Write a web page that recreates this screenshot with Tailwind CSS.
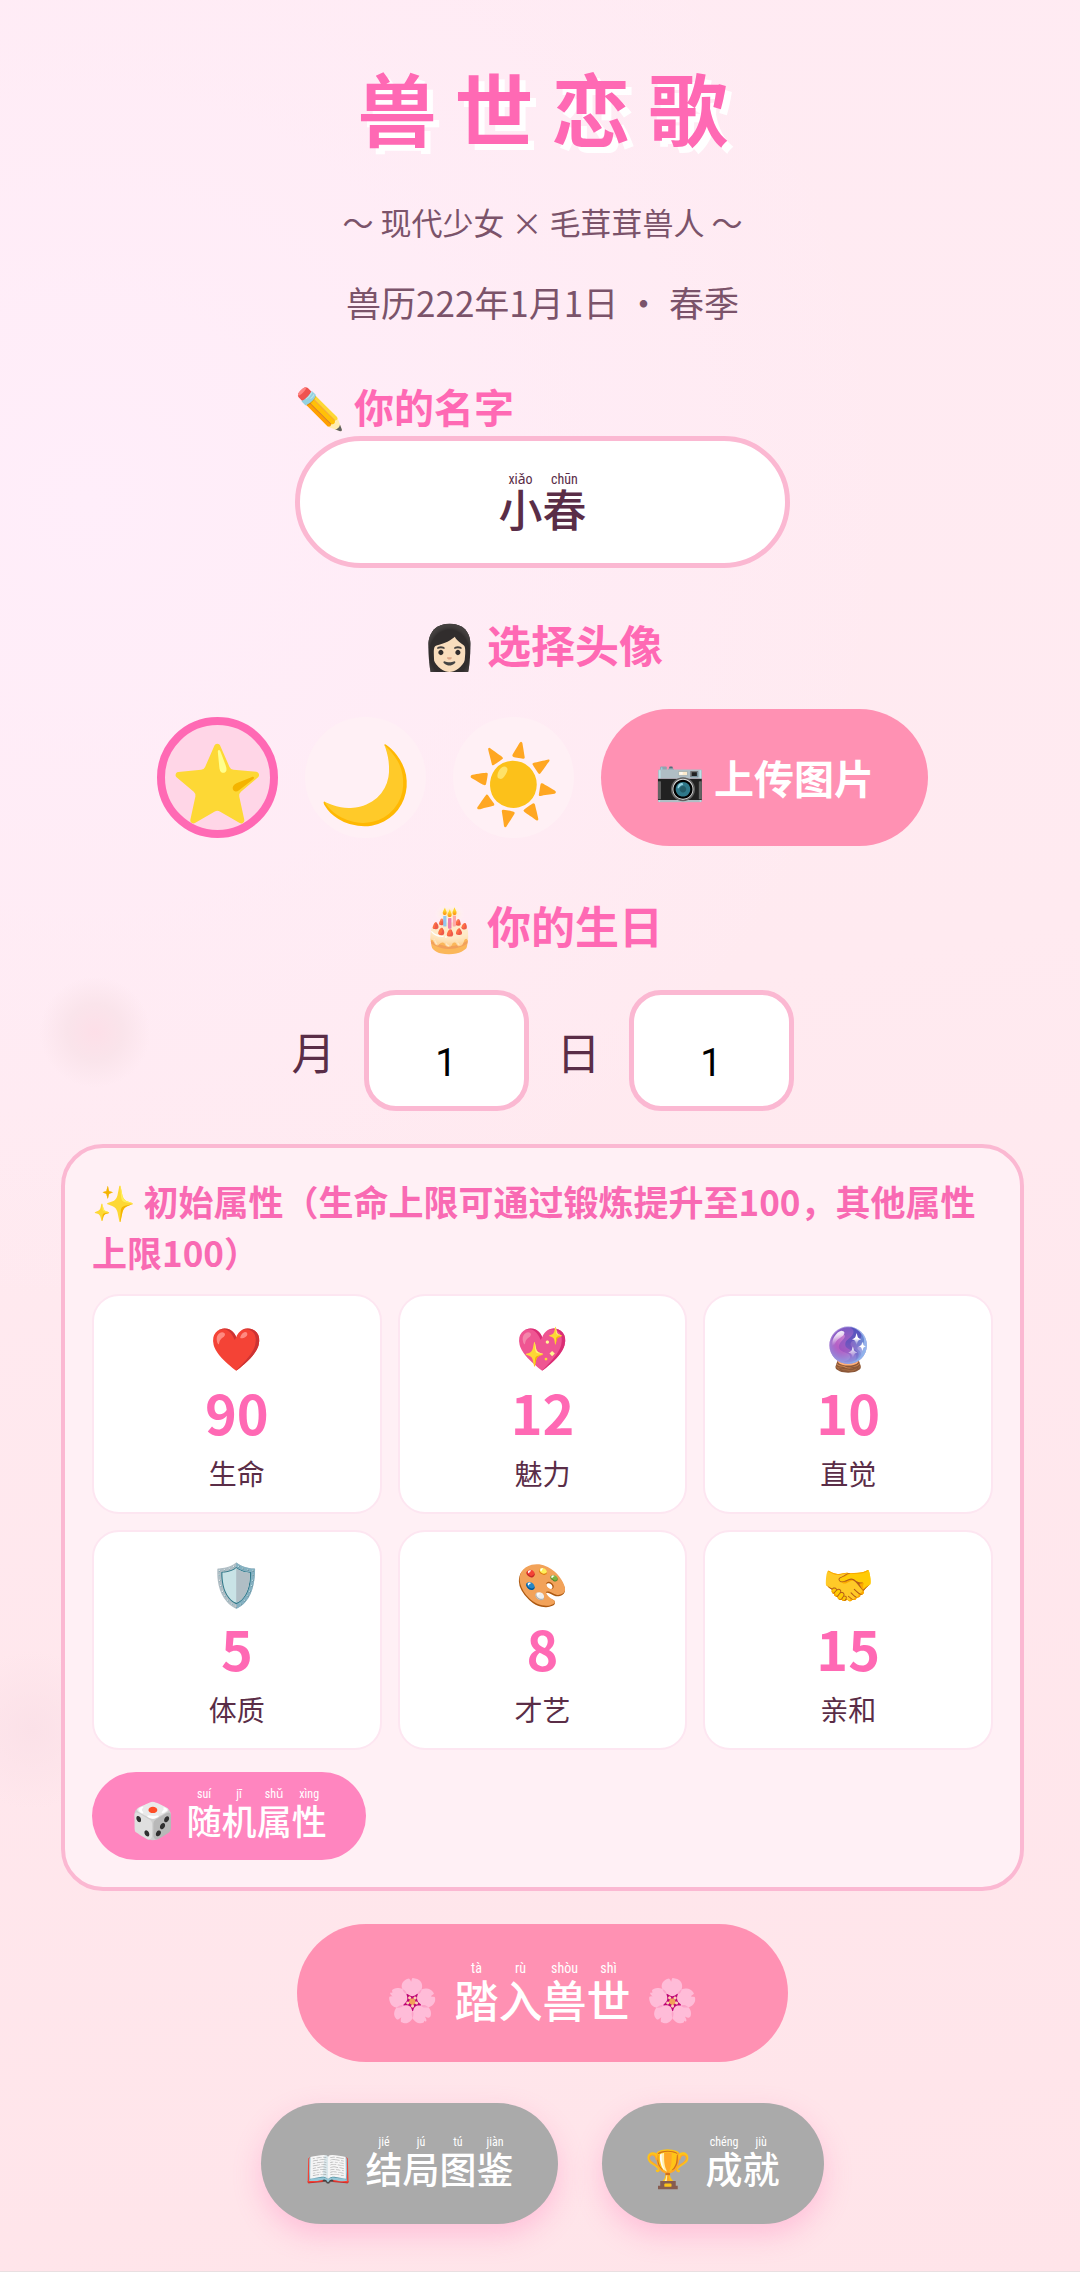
<!DOCTYPE html>
<html lang="zh-CN">
<head>
<meta charset="utf-8">
<meta name="viewport" content="width=device-width, initial-scale=1">
<title>兽世恋歌</title>
<script src="https://cdn.jsdelivr.net/npm/@tailwindcss/browser@4"></script>
</head>
<body class="relative min-h-screen overflow-x-hidden bg-[radial-gradient(circle_at_8%_22%,#ffeefa_0%,#ffeefa00_40%),linear-gradient(170deg,#ffebf3_0%,#ffeaf0_45%,#ffe4e9_100%)] font-['Noto_Sans_CJK_SC','Noto_Color_Emoji',sans-serif] text-[#5a2d47]">

<!-- drifting petals -->
<div aria-hidden="true" class="pointer-events-none absolute left-[39px] top-[976px] size-28 rounded-full bg-[radial-gradient(circle,#fddfe8_0%,#fae4eb_35%,#fae4eb00_70%)]"></div>
<div aria-hidden="true" class="pointer-events-none absolute -left-12 top-[1650px] size-40 rounded-full bg-[radial-gradient(circle,#fbe1e8_0%,#fbe1e800_70%)]"></div>

<main class="relative flex flex-col items-center border-b border-[#e9dfe1] pb-[47px] pl-[61px] pr-14 pt-[59px]">
  <h1 class="text-[79px] font-bold leading-[96px] text-[#ff69b4] [text-shadow:6px_6px_0_#fff]">兽 世 恋 歌</h1>
  <p class="mt-[51px] text-[31px] leading-8 text-[#7b536a]">～ 现代少女 × 毛茸茸兽人 ～</p>
  <p class="mt-[46px] text-[35px] leading-9 text-[#7b536a]">兽历222年1月1日 ・ 春季</p>

  <div class="mt-14 w-[495px] max-w-full">
    <label for="name" class="block text-[40px] font-bold leading-[60px] text-[#ff69b4]">✏️ 你的名字</label>
    <div class="relative">
      <input id="name" type="text" value="小春" class="block h-33 w-full rounded-full border-5 border-[#fbb8d2] bg-white pt-3 text-center text-[44px] font-medium outline-none">
      <div aria-hidden="true" class="pointer-events-none absolute inset-x-0 top-[34px] flex justify-center text-center font-['Roboto_Condensed','Liberation_Sans_Narrow','Noto_Sans',sans-serif] text-[14px] leading-[18px]"><span class="w-11">xiǎo</span><span class="w-11">chūn</span></div>
    </div>
  </div>

  <h2 class="mt-[46px] text-[44px] font-bold leading-[60px] text-[#ff69b4]">👩🏻 选择头像</h2>
  <div class="mt-[35px] flex flex-wrap items-center justify-center gap-[27px]">
    <label class="flex size-[121px] cursor-pointer items-center justify-center rounded-full bg-[#fff0f5] text-[76px] leading-[88px] has-[:checked]:border-8 has-[:checked]:border-[#ff69b4] has-[:checked]:bg-[#ffd6e7]"><input type="radio" name="avatar" aria-label="星星" checked class="sr-only">⭐</label>
    <label class="flex size-[121px] cursor-pointer items-center justify-center rounded-full bg-[#fff0f5] text-[76px] leading-[88px] has-[:checked]:border-8 has-[:checked]:border-[#ff69b4] has-[:checked]:bg-[#ffd6e7]"><input type="radio" name="avatar" aria-label="月亮" class="sr-only">🌙</label>
    <label class="flex size-[121px] cursor-pointer items-center justify-center rounded-full bg-[#fff0f5] text-[76px] leading-[88px] has-[:checked]:border-8 has-[:checked]:border-[#ff69b4] has-[:checked]:bg-[#ffd6e7]"><input type="radio" name="avatar" aria-label="太阳" class="sr-only">☀️</label>
    <button type="button" class="rounded-full bg-[#ff91b3] px-[54px] pb-[39px] pt-[38px] text-[40px] font-bold leading-[60px] text-white">📷 上传图片</button>
  </div>

  <h2 class="mt-[49px] text-[44px] font-bold leading-[60px] text-[#ff69b4]">🎂 你的生日</h2>
  <div class="mt-[35px] flex flex-wrap items-center justify-center gap-7 text-[44px]">
    <label for="month">月</label>
    <input id="month" type="text" inputmode="numeric" value="1" class="h-[121px] w-[165px] rounded-[32px] border-5 border-[#fbb8d2] bg-white pt-6 text-center font-['Roboto','Liberation_Sans',sans-serif] text-[38px] text-black outline-none">
    <label for="day">日</label>
    <input id="day" type="text" inputmode="numeric" value="1" class="h-[121px] w-[165px] rounded-[32px] border-5 border-[#fbb8d2] bg-white pt-6 text-center font-['Roboto','Liberation_Sans',sans-serif] text-[38px] text-black outline-none">
  </div>

  <section class="mt-[33px] w-full rounded-[42px] border-4 border-[#fbb8d2] bg-[#fff0f5] p-[27px]">
    <h3 class="text-[35px] font-bold leading-[51px] text-[#f96ab3]">✨ 初始属性（生命上限可通过锻炼提升至100，其他属性上限100）</h3>
    <dl class="mt-[17px] grid grid-cols-3 gap-4 text-center">
      <div class="flex flex-col rounded-[27px] border-2 border-[#fde6f1] bg-white pb-3 pt-[22px]"><span class="text-[42px] leading-[56px]">❤️</span><dt class="order-2 text-[28px] leading-[54px]">生命</dt><dd class="mt-1 text-[54px] font-bold leading-[68px] text-[#ff69b4]">90</dd></div>
      <div class="flex flex-col rounded-[27px] border-2 border-[#fde6f1] bg-white pb-3 pt-[22px]"><span class="text-[42px] leading-[56px]">💖</span><dt class="order-2 text-[28px] leading-[54px]">魅力</dt><dd class="mt-1 text-[54px] font-bold leading-[68px] text-[#ff69b4]">12</dd></div>
      <div class="flex flex-col rounded-[27px] border-2 border-[#fde6f1] bg-white pb-3 pt-[22px]"><span class="text-[42px] leading-[56px]">🔮</span><dt class="order-2 text-[28px] leading-[54px]">直觉</dt><dd class="mt-1 text-[54px] font-bold leading-[68px] text-[#ff69b4]">10</dd></div>
      <div class="flex flex-col rounded-[27px] border-2 border-[#fde6f1] bg-white pb-3 pt-[22px]"><span class="text-[42px] leading-[56px]">🛡️</span><dt class="order-2 text-[28px] leading-[54px]">体质</dt><dd class="mt-1 text-[54px] font-bold leading-[68px] text-[#ff69b4]">5</dd></div>
      <div class="flex flex-col rounded-[27px] border-2 border-[#fde6f1] bg-white pb-3 pt-[22px]"><span class="text-[42px] leading-[56px]">🎨</span><dt class="order-2 text-[28px] leading-[54px]">才艺</dt><dd class="mt-1 text-[54px] font-bold leading-[68px] text-[#ff69b4]">8</dd></div>
      <div class="flex flex-col rounded-[27px] border-2 border-[#fde6f1] bg-white pb-3 pt-[22px]"><span class="text-[42px] leading-[56px]">🤝</span><dt class="order-2 text-[28px] leading-[54px]">亲和</dt><dd class="mt-1 text-[54px] font-bold leading-[68px] text-[#ff69b4]">15</dd></div>
    </dl>
    <button type="button" class="mt-[22px] flex items-end gap-3 rounded-full bg-[#ff85bf] px-[39px] pb-[22px] pt-3.5 text-[35px] font-medium leading-9 text-white">
      <span class="pb-0.5">🎲</span>
      <span class="flex [&_rt]:font-['Roboto_Condensed','Liberation_Sans_Narrow','Noto_Sans',sans-serif] [&_rt]:text-[12px] [&_rt]:font-normal [&_rt]:leading-4">
        <ruby class="flex flex-col-reverse items-center">随<rt class="block">suí</rt></ruby><ruby class="flex flex-col-reverse items-center">机<rt class="block">jī</rt></ruby><ruby class="flex flex-col-reverse items-center">属<rt class="block">shǔ</rt></ruby><ruby class="flex flex-col-reverse items-center">性<rt class="block">xìng</rt></ruby>
      </span>
    </button>
  </section>

  <button type="button" class="mt-[33px] flex items-end gap-4 rounded-full bg-[#ff91b3] px-[89px] pb-[41px] pt-[35px] text-[44px] font-medium leading-11 text-white">
    <span class="pb-0.5 text-[42px]">🌸</span>
    <span class="flex [&_rt]:font-['Roboto_Condensed','Liberation_Sans_Narrow','Noto_Sans',sans-serif] [&_rt]:text-[14px] [&_rt]:font-normal [&_rt]:leading-[18px]">
      <ruby class="flex flex-col-reverse items-center">踏<rt class="block">tà</rt></ruby><ruby class="flex flex-col-reverse items-center">入<rt class="block">rù</rt></ruby><ruby class="flex flex-col-reverse items-center">兽<rt class="block">shòu</rt></ruby><ruby class="flex flex-col-reverse items-center">世<rt class="block">shì</rt></ruby>
    </span>
    <span class="pb-0.5 text-[42px]">🌸</span>
  </button>

  <div class="mt-[41px] flex flex-wrap justify-center gap-11">
    <button type="button" class="flex items-end gap-3.5 rounded-full bg-[#aaa] px-11 pb-[38px] pt-[31px] text-[37px] font-medium leading-9 text-white shadow-[0_11px_28px_#ff69b44d]">
      <span class="pb-0.5">📖</span>
      <span class="flex [&_rt]:font-['Roboto_Condensed','Liberation_Sans_Narrow','Noto_Sans',sans-serif] [&_rt]:text-[12px] [&_rt]:font-normal [&_rt]:leading-4">
        <ruby class="flex flex-col-reverse items-center">结<rt class="block">jié</rt></ruby><ruby class="flex flex-col-reverse items-center">局<rt class="block">jú</rt></ruby><ruby class="flex flex-col-reverse items-center">图<rt class="block">tú</rt></ruby><ruby class="flex flex-col-reverse items-center">鉴<rt class="block">jiàn</rt></ruby>
      </span>
    </button>
    <button type="button" class="flex items-end gap-3.5 rounded-full bg-[#aaa] px-11 pb-[38px] pt-[31px] text-[37px] font-medium leading-9 text-white shadow-[0_11px_28px_#ff69b44d]">
      <span class="pb-0.5">🏆</span>
      <span class="flex [&_rt]:font-['Roboto_Condensed','Liberation_Sans_Narrow','Noto_Sans',sans-serif] [&_rt]:text-[12px] [&_rt]:font-normal [&_rt]:leading-4">
        <ruby class="flex flex-col-reverse items-center">成<rt class="block">chéng</rt></ruby><ruby class="flex flex-col-reverse items-center">就<rt class="block">jiù</rt></ruby>
      </span>
    </button>
  </div>
</main>
</body>
</html>
